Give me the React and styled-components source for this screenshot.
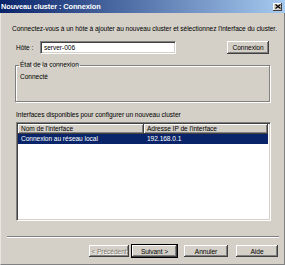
import React from "react";
import styled, { createGlobalStyle } from "styled-components";

const Global = createGlobalStyle`
  html, body { margin: 0; padding: 0; background: #d4d0c8; }
  body { font-family: "Liberation Sans", "DejaVu Sans", sans-serif; }
`;

const Window = styled.div`
  box-sizing: border-box;
  width: 285px;
  height: 265px;
  background: #d4d0c8;
  display: flex;
  flex-direction: column;
  font-size: 6.6px;
  letter-spacing: -0.05px;
  color: #000;
  overflow: hidden;
`;

const TitleBar = styled.div`
  flex: none;
  height: 13px;
  background: linear-gradient(to right, #0a246a, #a6caf0);
  display: flex;
  align-items: center;
  justify-content: space-between;
  padding: 0 3px 0 1px;
`;

const Title = styled.span`
  color: #fff;
  font-weight: bold;
  font-size: 7.4px;
  letter-spacing: -0.1px;
`;

const CloseBtn = styled.div`
  width: 9px;
  height: 8px;
  background: #d4d0c8;
  box-shadow: inset -1px -1px 0 #404040, inset 1px 1px 0 #fff;
  display: flex;
  align-items: center;
  justify-content: center;
`;

const Frame = styled.div`
  box-sizing: border-box;
  flex: 1;
  display: flex;
  flex-direction: column;
  border-left: 1px solid #e8e6e0;
  border-right: 1px solid #808080;
  border-bottom: 1px solid #808080;
  padding: 12px 5px 0 11px;
`;

const Intro = styled.div`
  white-space: nowrap;
  line-height: 8px;
`;

const HostRow = styled.div`
  display: flex;
  align-items: center;
  margin: 7px 0 0 4px;
  height: 15px;
`;

const Label = styled.span`
  width: 24px;
`;

const Input = styled.div`
  box-sizing: border-box;
  width: 136px;
  height: 13px;
  background: #fff;
  border-top: 1px solid #808080;
  border-left: 1px solid #808080;
  border-right: 1px solid #fff;
  border-bottom: 1px solid #fff;
  box-shadow: inset 1px 1px 0 #404040, inset -1px -1px 0 #d4d0c8;
  padding-left: 3px;
  line-height: 11px;
`;

const Button = styled.div`
  box-sizing: border-box;
  width: ${(p) => p.w || 45}px;
  height: ${(p) => p.h || 14}px;
  display: flex;
  align-items: center;
  justify-content: center;
  background: #d4d0c8;
  color: ${(p) => (p.disabled ? "#7c7870" : "#000")};
  text-shadow: ${(p) => (p.disabled ? "1px 1px 0 #fff" : "none")};
  border: 1px solid ${(p) => (p.primary ? "#000" : "transparent")};
  box-shadow: inset -1px -1px 0 #404040, inset 1px 1px 0 #fff,
    inset -2px -2px 0 #808080;
  margin-left: ${(p) => p.ml || 0}px;
`;

const Group = styled.fieldset`
  box-sizing: border-box;
  margin: 6px 0 0 3px;
  width: 255px;
  height: 41px;
  padding: 0 0 0 4px;
  border: 1px solid #808080;
  box-shadow: 1px 1px 0 #fff, inset 1px 1px 0 #fff;
`;

const Legend = styled.legend`
  padding: 0 1px;
  margin-left: -1px;
  line-height: 8px;
`;

const GroupText = styled.div`
  margin-top: 4px;
  line-height: 8px;
`;

const SectionLabel = styled.div`
  margin: 9px 0 0 4px;
  line-height: 8px;
`;

const List = styled.div`
  box-sizing: border-box;
  margin: 3px 0 0 4px;
  width: 255px;
  height: 99px;
  background: #fff;
  border-top: 1px solid #808080;
  border-left: 1px solid #808080;
  border-right: 1px solid #fff;
  border-bottom: 1px solid #fff;
  box-shadow: inset 1px 1px 0 #404040, inset -1px -1px 0 #d4d0c8;
  padding: 1px 2px 2px 1px;
  display: flex;
  flex-direction: column;
`;

const HeaderRow = styled.div`
  display: grid;
  grid-template-columns: 126px 1fr;
  height: 10px;
`;

const HeaderCell = styled.div`
  box-sizing: border-box;
  background: #d4d0c8;
  box-shadow: inset -1px -1px 0 #404040, inset 1px 1px 0 #fff,
    inset -2px -2px 0 #808080;
  padding-left: 3px;
  line-height: 10px;
  white-space: nowrap;
  overflow: hidden;
`;

const Row = styled.div`
  display: grid;
  grid-template-columns: 126px 1fr;
  height: 10px;
  background: ${(p) => (p.selected ? "#0a246a" : "transparent")};
  color: ${(p) => (p.selected ? "#fff" : "#000")};
  line-height: 10px;
`;

const Cell = styled.div`
  padding-left: 3px;
  white-space: nowrap;
`;

const Separator = styled.div`
  margin: 15px 0 0 -5px;
  height: 1px;
  background: #808080;
  border-bottom: 1px solid #fff;
`;

const Footer = styled.div`
  display: flex;
  justify-content: flex-end;
  margin-top: 6px;
`;

export default function App() {
  return (
    <>
      <Global />
      <Window>
        <TitleBar>
          <Title>Nouveau cluster : Connexion</Title>
          <CloseBtn>
            <svg width="6" height="5" viewBox="0 0 6 5">
              <path d="M0.5 0.5 L5.5 4.5 M5.5 0.5 L0.5 4.5" stroke="#000" strokeWidth="1.2" />
            </svg>
          </CloseBtn>
        </TitleBar>
        <Frame>
          <Intro>
            Connectez-vous à un hôte à ajouter au nouveau cluster et sélectionnez l'interface du cluster.
          </Intro>
          <HostRow>
            <Label>Hôte :</Label>
            <Input>server-006</Input>
            <Button w={44} h={15} ml={50}>Connexion</Button>
          </HostRow>
          <Group>
            <Legend>État de la connexion</Legend>
            <GroupText>Connecté</GroupText>
          </Group>
          <SectionLabel>Interfaces disponibles pour configurer un nouveau cluster</SectionLabel>
          <List>
            <HeaderRow>
              <HeaderCell>Nom de l'interface</HeaderCell>
              <HeaderCell>Adresse IP de l'interface</HeaderCell>
            </HeaderRow>
            <Row selected>
              <Cell>Connexion au réseau local</Cell>
              <Cell>192.168.0.1</Cell>
            </Row>
          </List>
          <Separator />
          <Footer>
            <Button disabled w={42}>&lt; Précédent</Button>
            <Button primary w={47} ml={1}>Suivant &gt;</Button>
            <Button w={46} ml={5}>Annuler</Button>
            <Button w={44} ml={6}>Aide</Button>
          </Footer>
        </Frame>
      </Window>
    </>
  );
}
